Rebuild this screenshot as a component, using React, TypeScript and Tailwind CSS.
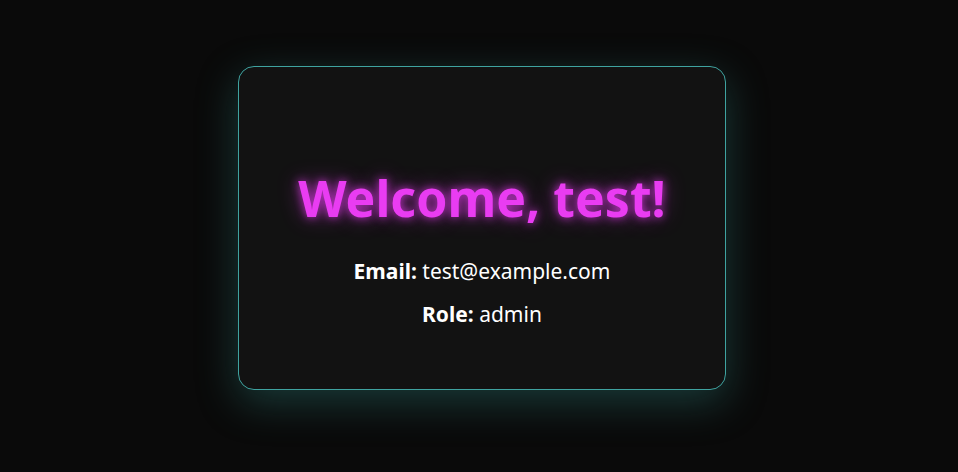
export default function App() {
  return (
    <div className="min-h-screen w-full bg-[#0a0a0a] flex justify-center pt-[66px] pb-[82px] pl-[6px] font-['Noto_Sans',sans-serif]">
      <div className="w-[488px] h-[324px] pt-[42px] rounded-2xl border border-[#3fa3a0] bg-[#121212] shadow-[0_12px_40px_rgba(47,130,125,0.4)] flex flex-col items-center justify-center text-center">
        <h1 className="text-[50px] font-bold leading-tight text-[#e93cf2] [text-shadow:0_0_10px_rgba(233,60,242,0.8),0_0_22px_rgba(233,60,242,0.45)]">
          Welcome, test!
        </h1>
        <p className="mt-[26px] text-[21px] text-white">
          <span className="font-bold">Email:</span> test@example.com
        </p>
        <p className="mt-[12px] text-[21px] text-white">
          <span className="font-bold">Role:</span> admin
        </p>
      </div>
    </div>
  );
}
